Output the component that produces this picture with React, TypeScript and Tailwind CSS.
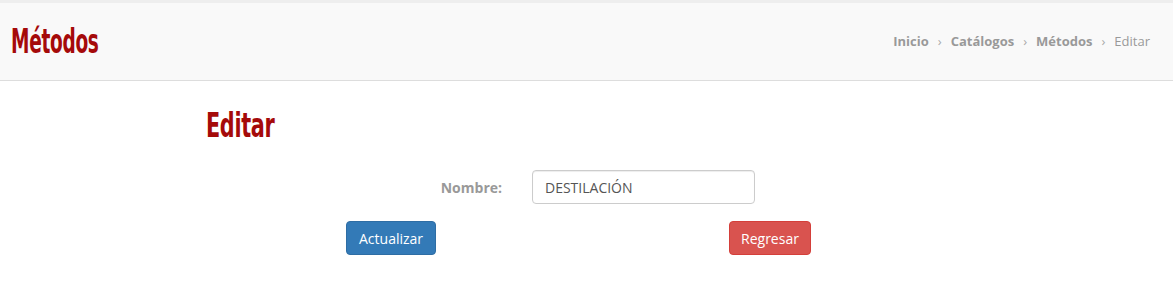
export default function App() {
  const crumbs = ["Inicio", "Catálogos", "Métodos"];
  return (
    <div className="min-h-[291px] bg-white font-['Open_Sans',sans-serif] text-[13px] text-[#555]">
      <header className="flex h-[81px] items-center justify-between border-t-[3px] border-b border-t-[#eeeeee] border-b-[#dddddd] bg-[#f9f9f9] pl-[11px] pr-[23px]">
        <h1 className="origin-left font-['DejaVu_Sans_Condensed','DejaVu_Sans',sans-serif] text-[33px] font-bold leading-none tracking-[-0.5px] text-[#a50a0a] [transform:scaleX(0.625)]">
          Métodos
        </h1>
        <nav className="flex items-center text-[13px] text-[#999]">
          {crumbs.map((c) => (
            <span key={c} className="flex items-center">
              <span className="font-bold">{c}</span>
              <span className="px-[9px] text-[#aaa]">›</span>
            </span>
          ))}
          <span>Editar</span>
        </nav>
      </header>

      <main className="pl-[206px] pt-[24px]">
        <h2 className="origin-left font-['DejaVu_Sans_Condensed','DejaVu_Sans',sans-serif] text-[34px] font-bold leading-[40px] tracking-[-0.5px] text-[#a50a0a] [transform:scaleX(0.68)]">
          Editar
        </h2>

        <div className="mt-[25px] flex items-center">
          <label className="w-[296px] text-right text-[14px] font-bold text-[#999]">
            Nombre:
          </label>
          <input
            defaultValue="DESTILACIÓN"
            className="ml-[30px] h-[34px] w-[223px] rounded-[4px] border border-[#cccccc] px-[12px] text-[14px] text-[#555] shadow-[inset_0_1px_1px_rgba(0,0,0,0.075)] outline-none"
          />
        </div>

        <div className="mt-[17px] flex items-center">
          <button className="ml-[140px] h-[34px] rounded-[4px] border border-[#2e6da4] bg-[#337ab7] px-[12px] text-[14px] text-white">
            Actualizar
          </button>
          <button className="ml-[293px] h-[34px] rounded-[4px] border border-[#d43f3a] bg-[#d9534f] px-[11px] text-[14px] text-white">
            Regresar
          </button>
        </div>
      </main>
    </div>
  );
}
